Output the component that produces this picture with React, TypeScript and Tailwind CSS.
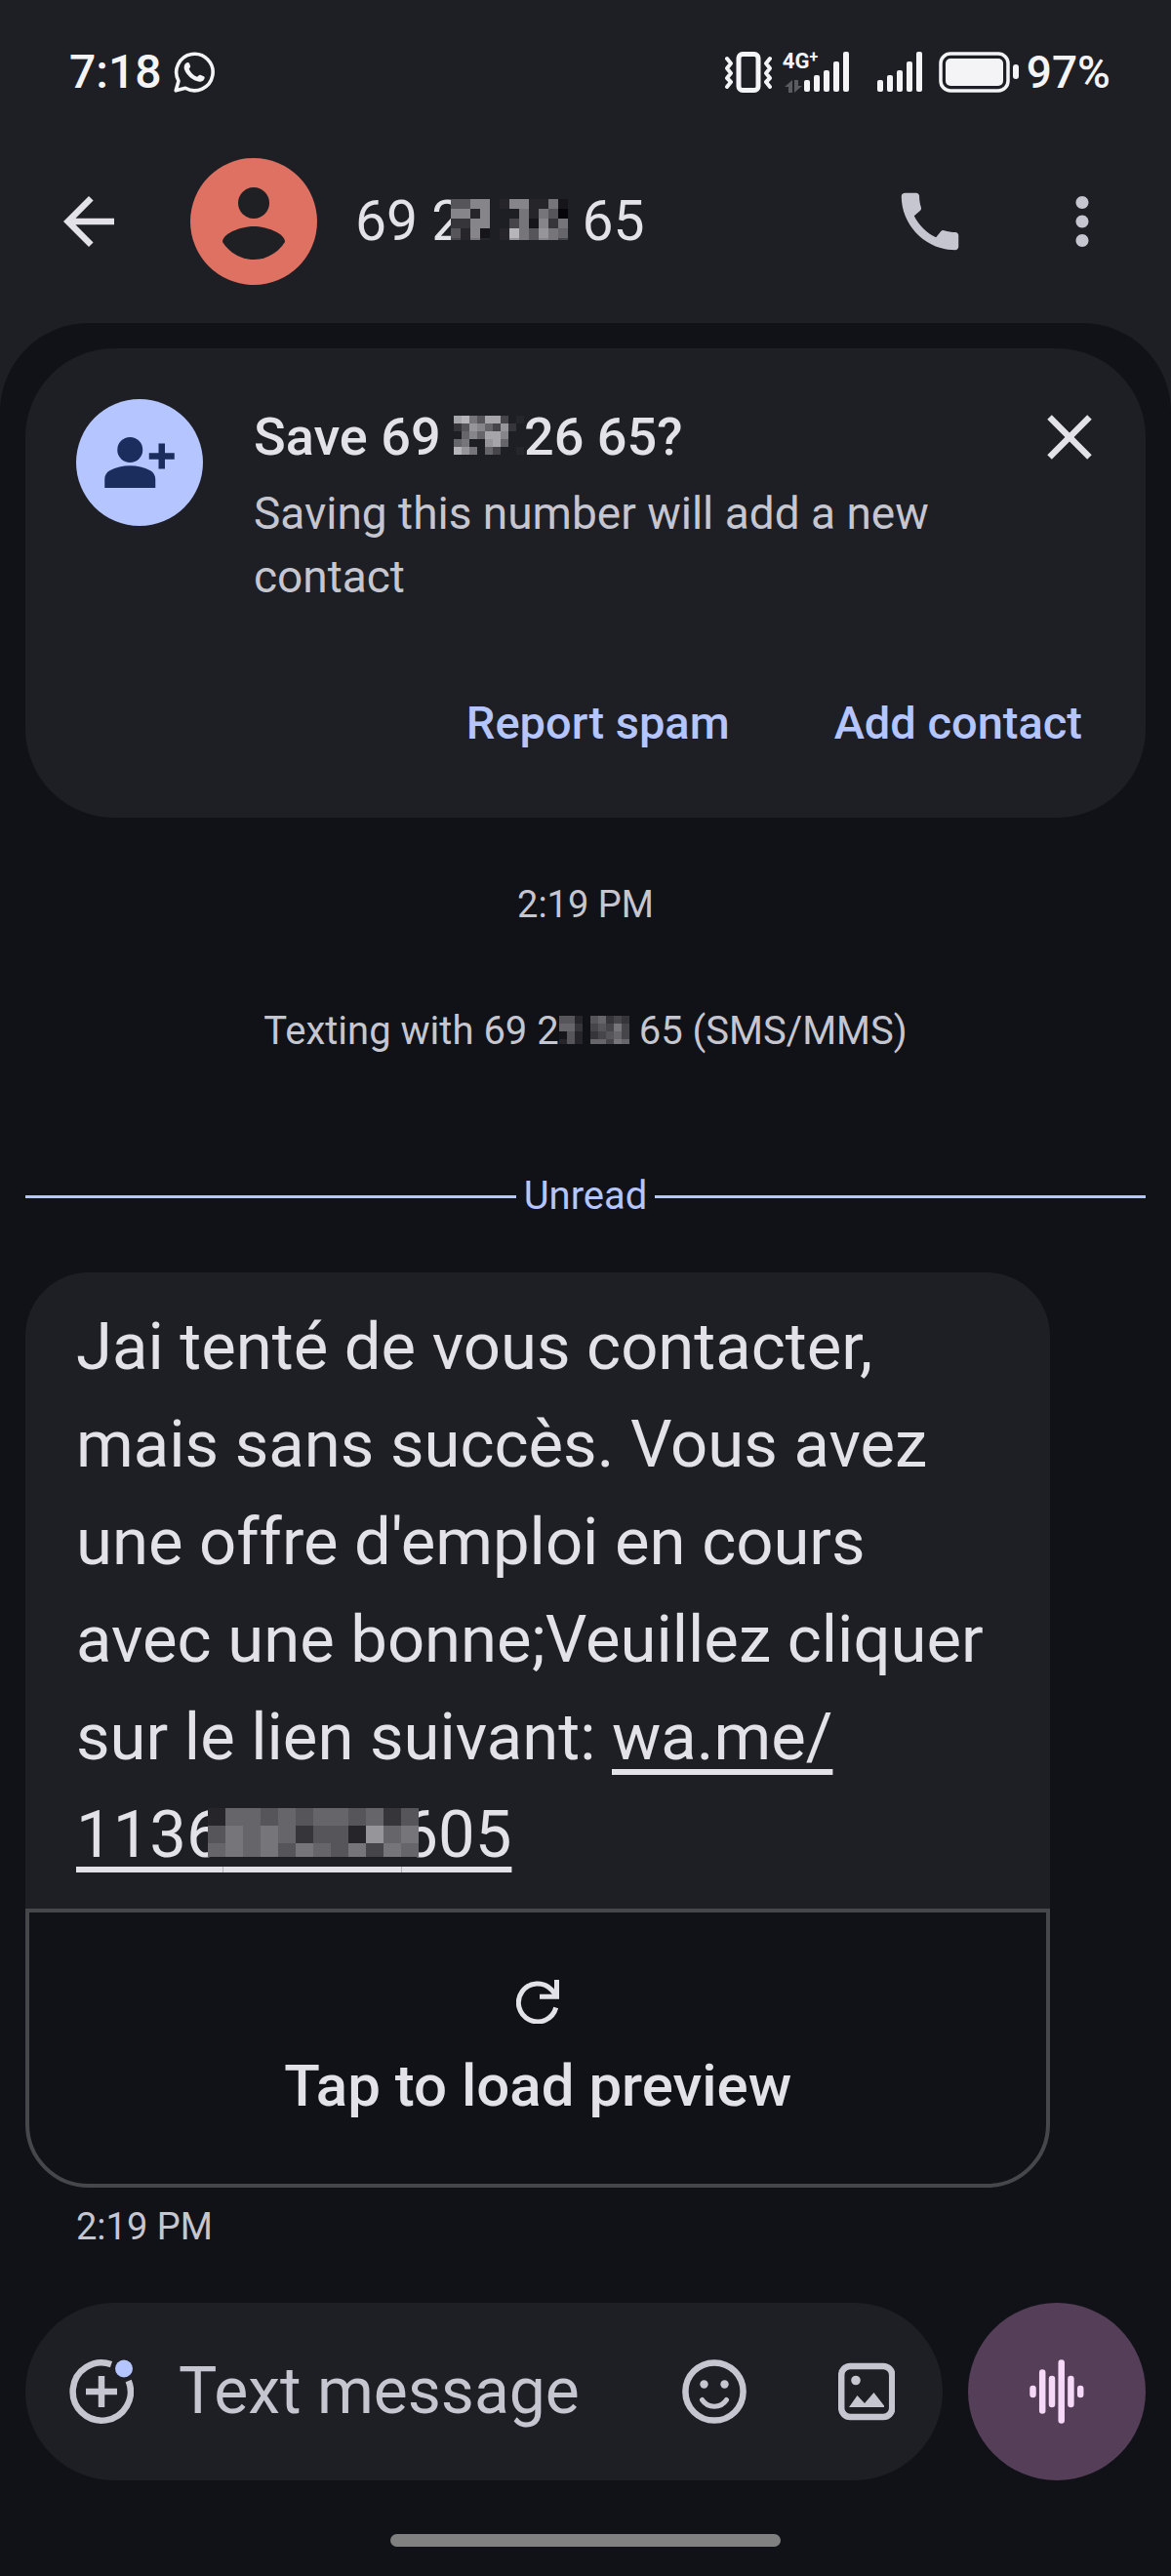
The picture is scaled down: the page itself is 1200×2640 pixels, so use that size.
import React, { useState } from 'react';
import { MdArrowBack, MdCall, MdClose, MdMoreVert } from 'react-icons/md';

interface MosaicProps {
  rows: string[];
  cell: number;
  height: number;
  className?: string;
}

// Each character is one cell: a hex digit is its grey level, a dot leaves it empty
const HEADER_MOSAIC = ['5588.2882271', '8828...72750', '3388..471837', '5281.2b75976', '4272.2975874'];
const SAVE_MOSAIC = ['ab75aa4.2', '35986493.', '.686aa8..', '67..9a6..', 'b97.64..2'];
const TEXTING_MOSAIC = ['552.56343', '663.45474', '152.34564', '252.66476'];
const LINK_MOSAIC = ['266565665635', '576763552967', '676757657476'];

const Mosaic: React.FC<MosaicProps> = ({ rows, cell, height, className = 'inline align-baseline' }) => (
  <svg width={rows[0].length * cell} height={height} className={className} shapeRendering="crispEdges" aria-hidden="true">
    {rows.map((row, y) =>
      row.split('').map((level, x) => {
        if (level === '.') return null;
        const v = parseInt(level, 16) * 16 + 6;
        return <rect key={`${x}-${y}`} x={x * cell} y={y * cell} width={cell} height={cell} fill={`rgb(${v},${v},${v + 4})`} />;
      })
    )}
  </svg>
);

const WhatsAppIcon = () => (
  <svg width="42" height="42" viewBox="0 0 42 42" fill="none" aria-hidden="true">
    <path d="M2.2 39.8 5 30A18.7 18.7 0 1 1 12 37.2Z" stroke="currentColor" strokeWidth="3.6" strokeLinejoin="round" />
    <path
      d="M11.2 13.6c.8-2 2.8-3 4.2-2.3.6.3 1 1.500 1.600 3.200.5 1.300-.9 2.200-1.300 3.200 1.600 3.700 4.400 6.500 8.300 8 1.200-.8 2.100-2.400 3.300-2l4 1.900c.9.500.2 2.700-.8 3.600-1.700 1.700-4.300 1.800-7 .9C17.500 28 12.900 23.100 11 18.200c-.5-1.500-.4-3.200.2-4.600z"
      fill="currentColor"
    />
  </svg>
);

const VibrateIcon = () => (
  <svg width="50" height="42" viewBox="0 0 50 42" fill="none" stroke="currentColor" aria-hidden="true">
    <rect x="15" y="2.500" width="20" height="37" rx="4" strokeWidth="5" />
    <path d="m3 7 4 5-4 5 4 5-4 5 4 4-4 5M47 7l-4 5 4 5-4 5 4 5-4 4 4 5" strokeWidth="4" strokeLinejoin="round" strokeLinecap="round" />
  </svg>
);

const SignalBars = () => (
  <svg width="47" height="42" viewBox="0 0 47 42" fill="currentColor" aria-hidden="true">
    <rect x="0" y="29" width="6" height="12" rx="2" />
    <rect x="10" y="24" width="6" height="17" rx="2" />
    <rect x="20" y="19" width="6" height="22" rx="2" />
    <rect x="30" y="10" width="6" height="31" rx="2" />
    <rect x="40" y="0" width="6" height="41" rx="2" />
  </svg>
);

const BatteryIcon = () => (
  <svg width="82" height="42" viewBox="0 0 82 42" aria-hidden="true">
    <rect x="2" y="2" width="69" height="38" rx="10" fill="none" stroke="currentColor" strokeWidth="3.500" />
    <rect x="7" y="7" width="59" height="28" rx="5" fill="currentColor" />
    <rect x="76" y="13" width="6" height="15" rx="3" fill="currentColor" />
  </svg>
);

const Avatar = () => (
  <svg width="130" height="130" viewBox="0 0 130 130" className="shrink-0" aria-hidden="true">
    <circle cx="65" cy="65" r="65" fill="#df7163" />
    <circle cx="65" cy="46" r="16" fill="#1f2023" />
    <path d="M33 86c0-9 19-16 32-16s32 7 32 16c-7 11-19 18-32 18s-25-7-32-18z" fill="#1f2023" />
  </svg>
);

const PersonAddIcon = () => (
  <svg width="78" height="78" viewBox="0 0 24 24" fill="#1b2d5d" aria-hidden="true">
    <circle cx="9" cy="8" r="4" />
    <path d="M1 20v-2.800c0-1.100.6-2.200 1.600-2.700C4.600 13.500 6.700 13 9 13s4.400.5 6.400 1.500c1 .5 1.600 1.600 1.600 2.700V20zM18 6h2v3h3v2h-3v3h-2v-3h-3V9h3z" />
  </svg>
);

const ReloadIcon = () => (
  <svg width="44" height="45" viewBox="0 0 44 45" fill="none" stroke="currentColor" strokeWidth="5" aria-hidden="true">
    <path d="M40.700 28.500A19.500 19.500 0 1 1 36 10l5 6M41.500 0v17.200H24" />
  </svg>
);

const PlusIcon = () => (
  <svg width="66" height="66" viewBox="0 0 66 66" fill="none" aria-hidden="true">
    <path d="M60.700 22A29.600 29.600 0 1 1 43 5.100M33 17v32M17 33h32" stroke="currentColor" strokeWidth="6.500" />
    <circle cx="56" cy="9.500" r="9" fill="#b4c5ff" />
  </svg>
);

const EmojiIcon = () => (
  <svg width="66" height="66" viewBox="0 0 66 66" fill="none" aria-hidden="true">
    <circle cx="33" cy="33" r="29.600" stroke="currentColor" strokeWidth="6.500" />
    <circle cx="22.500" cy="25.500" r="4.200" fill="currentColor" />
    <circle cx="43.500" cy="25.500" r="4.200" fill="currentColor" />
    <path d="M20.500 41.500c3 4.500 7.500 6.700 12.500 6.700s9.500-2.200 12.500-6.700" stroke="currentColor" strokeWidth="5" strokeLinecap="round" />
  </svg>
);

const GalleryIcon = () => (
  <svg width="58" height="60" viewBox="0 0 58 60" fill="none" aria-hidden="true">
    <rect x="3.200" y="4" width="52" height="52" rx="9" stroke="currentColor" strokeWidth="6.500" />
    <circle cx="18" cy="18.500" r="4.800" fill="currentColor" />
    <path d="m11 46 8.500-12 7.500 8 9.500-11L47 44.500V46z" fill="currentColor" />
  </svg>
);

const VoiceIcon = () => (
  <svg width="58" height="66" viewBox="0 0 58 66" stroke="#f6d9f8" strokeWidth="6.500" strokeLinecap="round" aria-hidden="true">
    <path d="M4.500 30v6M14.200 13.500v39M24 20v26M33.700 3.500v59M43.400 20v26M53.200 30v6" />
  </svg>
);

const StatusBar = () => (
  <div className="flex items-center justify-between pl-[71px] pr-[62px] font-medium leading-[50px] text-[#f4f4f6]">
    <div className="flex items-center gap-3">
      <span className="text-[48px]">7:18</span>
      <WhatsAppIcon />
    </div>
    <div className="flex items-center">
      <VibrateIcon />
      <div className="relative ml-8">
        <SignalBars />
        <div className="absolute -left-[22px] top-0 flex items-start font-['Liberation_Sans_Narrow','Roboto',sans-serif] font-bold leading-5">
          <span className="text-[22px]">4G</span>
          <span className="text-[16px] leading-3">+</span>
        </div>
        <svg width="18" height="13" viewBox="0 0 18 13" fill="#5a5b60" className="absolute -left-5 bottom-0" aria-hidden="true">
          <path d="M8 0v13H4V7H0zM10 0h4v6h4l-8 7z" />
        </svg>
      </div>
      <div className="ml-7">
        <SignalBars />
      </div>
      <div className="ml-4">
        <BatteryIcon />
      </div>
      <span className="ml-2 text-[46px]">97%</span>
    </div>
  </div>
);

const AppBar = () => (
  <div className="flex items-center px-[52px] text-[#c6c6d0]">
    <button aria-label="Back" className="text-[#e3e2e9]">
      <MdArrowBack size={78} />
    </button>
    <div className="ml-[65px] flex flex-1 items-center gap-[39px]">
      <Avatar />
      <h1 className="whitespace-nowrap text-[57px] leading-[80px] text-[#e3e2e9]">
        69 2<Mosaic rows={HEADER_MOSAIC} cell={10} height={42} className="-ml-3 inline align-baseline" /> 65
      </h1>
    </div>
    <button aria-label="Call">
      <MdCall size={78} />
    </button>
    <button aria-label="More options" className="ml-[78px]">
      <MdMoreVert size={78} />
    </button>
  </div>
);

const SaveContactCard: React.FC<{ onClose: () => void }> = ({ onClose }) => (
  <section className="mt-[26px] rounded-[91px] bg-[#1e1f24] pb-[65px] pl-[52px] pr-[39px] pt-[52px]">
    <div className="flex items-start">
      <div className="flex h-[130px] w-[130px] shrink-0 items-center justify-center rounded-full bg-[#b4c5ff]">
        <PersonAddIcon />
      </div>
      <div className="ml-[52px] flex-1 pt-[6px]">
        <h2 className="text-[54px] font-medium leading-[65px] text-[#e3e2e9]">
          Save 69 <Mosaic rows={SAVE_MOSAIC} cell={8} height={40} />
          26 65?
        </h2>
        <p className="mt-[14px] text-[46px] leading-[65px] text-[#c6c6d0]">Saving this number will add a new contact</p>
      </div>
      <button aria-label="Dismiss" onClick={onClose} className="text-[#e3e2e9]">
        <MdClose size={78} />
      </button>
    </div>
    <div className="mt-[84px] flex justify-end gap-[107px] pr-[26px] text-[47px] font-medium leading-[65px] text-[#b4c5ff]">
      <button>Report spam</button>
      <button>Add contact</button>
    </div>
  </section>
);

const IncomingMessage = () => (
  <article className="mt-[52px] w-[91.5%]">
    <div className="rounded-t-[65px] bg-[#1e1f24] px-[52px] py-[26px]">
      <p className="text-[67px] leading-[100px] text-[#e3e2e9]">
        Jai tenté de vous contacter, mais sans succès. Vous avez une offre d'emploi en cours avec une bonne;Veuillez cliquer sur le lien suivant:{' '}
        <a href="#" className="underline decoration-[6px] underline-offset-[10px]">
          wa.me/
          <wbr />
          <span className="whitespace-nowrap">
            1136
            <span className="relative">
              {'\u00a0'.repeat(11)}
              <Mosaic rows={LINK_MOSAIC} cell={18} height={50} className="absolute -left-4 bottom-4" />
            </span>
            605
          </span>
        </a>
      </p>
    </div>
    <button className="flex w-full flex-col items-center gap-[25px] rounded-b-[65px] border-4 border-[#46474b] pb-[61px] pt-[69px] text-[#e3e2e9]">
      <ReloadIcon />
      <span className="text-[60px] font-medium leading-[78px]">Tap to load preview</span>
    </button>
    <time className="mt-[14px] block pl-[52px] text-[38px] leading-[52px] text-[#c6c6d0]">2:19 PM</time>
  </article>
);

const Composer = () => {
  const [text, setText] = useState('');

  return (
    <footer className="mt-auto px-[26px] pb-[30px] pt-12">
      <div className="flex items-center gap-[26px]">
        <div className="flex h-[182px] min-w-0 flex-1 items-center rounded-full bg-[#1e1f24] pl-[45px] pr-[49px] text-[#c6c6d0]">
          <button aria-label="Add attachment">
            <PlusIcon />
          </button>
          <input
            type="text"
            aria-label="Text message"
            placeholder="Text message"
            value={text}
            onChange={(e) => setText(e.target.value)}
            className="ml-[46px] min-w-0 flex-1 bg-transparent text-[66px] leading-[78px] outline-none placeholder:text-[#c6c6d0]"
          />
          <button aria-label="Emoji">
            <EmojiIcon />
          </button>
          <button aria-label="Gallery" className="ml-[94px]">
            <GalleryIcon />
          </button>
        </div>
        <button aria-label="Record voice message" className="flex h-[182px] w-[182px] shrink-0 items-center justify-center rounded-full bg-[#553e57]">
          <VoiceIcon />
        </button>
      </div>
      <div className="mx-auto mt-[55px] h-[13px] w-[400px] rounded-full bg-[#808080]" />
    </footer>
  );
};

export default function App() {
  const [showCard, setShowCard] = useState(true);

  return (
    <div className="flex min-h-screen flex-col bg-[#1e1f24] font-['Roboto',sans-serif]">
      <header className="pb-[39px] pt-[49px]">
        <StatusBar />
        <div className="mt-[63px]">
          <AppBar />
        </div>
      </header>
      <div className="flex flex-1 flex-col rounded-t-[91px] bg-[#111217]">
        <main className="px-[26px]">
          {showCard && <SaveContactCard onClose={() => setShowCard(false)} />}
          <div className="mt-[63px] text-center leading-[52px] text-[#c6c6d0]">
            <time className="block text-[38px]">2:19 PM</time>
            <p className="mt-[78px] text-[40px]">
              Texting with 69 2<Mosaic rows={TEXTING_MOSAIC} cell={8} height={29} /> 65 (SMS/MMS)
            </p>
          </div>
          <div className="mt-[117px] flex items-center gap-2 text-[40px] leading-[52px] text-[#b4c5ff]">
            <div className="h-[3px] flex-1 bg-[#b4c5ff]" />
            <span>Unread</span>
            <div className="h-[3px] flex-1 bg-[#b4c5ff]" />
          </div>
          <IncomingMessage />
        </main>
        <Composer />
      </div>
    </div>
  );
}
